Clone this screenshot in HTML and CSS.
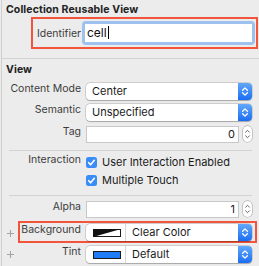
FILE: index.html
```html
<!DOCTYPE html>
<html lang="en">
<head>
  <meta charset="UTF-8">
  <title>Attributes Inspector</title>
  <link rel="stylesheet" href="styles.css">
</head>
<body>
  <div class="panel">
    <h2 class="section-title">Collection Reusable View</h2>
    <div class="highlight ident">
      <span class="label">Identifier</span>
      <div class="focus-ring">
        <div class="text-input">cell<span class="caret"></span></div>
      </div>
    </div>

    <hr class="rule full">

    <h2 class="section-title view">View</h2>

    <div class="row first">
      <span class="gutter"></span>
      <span class="label">Content Mode</span>
      <div class="popup">
        <span class="popup-text">Center</span>
        <span class="popup-btn">
          <svg viewBox="0 0 14 17" width="14" height="17"><path d="M4.6 7.3 7 4.9 9.4 7.3M4.6 9.7 7 12.1 9.4 9.7" fill="none" stroke="#fff" stroke-width="1.3" stroke-linecap="round" stroke-linejoin="round"/></svg>
        </span>
      </div>
    </div>

    <div class="row">
      <span class="gutter"></span>
      <span class="label">Semantic</span>
      <div class="popup">
        <span class="popup-text">Unspecified</span>
        <span class="popup-btn">
          <svg viewBox="0 0 14 17" width="14" height="17"><path d="M4.6 7.3 7 4.9 9.4 7.3M4.6 9.7 7 12.1 9.4 9.7" fill="none" stroke="#fff" stroke-width="1.3" stroke-linecap="round" stroke-linejoin="round"/></svg>
        </span>
      </div>
    </div>

    <div class="row tag">
      <span class="gutter"></span>
      <span class="label">Tag</span>
      <div class="field">0</div>
      <span class="stepper">
        <svg viewBox="0 0 9 16" width="9" height="16"><path d="M2.6 6.2 4.5 4.3 6.4 6.2M2.6 9.8 4.5 11.7 6.4 9.8" fill="none" stroke="#666" stroke-width="1" stroke-linecap="round" stroke-linejoin="round"/></svg>
      </span>
    </div>

    <hr class="rule">

    <div class="row checks">
      <span class="gutter"></span>
      <span class="label">Interaction</span>
      <div class="check-list">
        <div class="check-item">
          <svg class="checkbox" viewBox="0 0 11 11" width="11" height="11"><rect width="11" height="11" rx="2.5" fill="#3a8cf6"/><path d="M2.7 5.7 4.6 7.8 8.3 3.3" fill="none" stroke="#fff" stroke-width="1.6" stroke-linecap="round" stroke-linejoin="round"/></svg>
          <span>User Interaction Enabled</span>
        </div>
        <div class="check-item">
          <svg class="checkbox" viewBox="0 0 11 11" width="11" height="11"><rect width="11" height="11" rx="2.5" fill="#3a8cf6"/><path d="M2.7 5.7 4.6 7.8 8.3 3.3" fill="none" stroke="#fff" stroke-width="1.6" stroke-linecap="round" stroke-linejoin="round"/></svg>
          <span>Multiple Touch</span>
        </div>
      </div>
    </div>

    <hr class="rule">

    <div class="row alpha">
      <span class="gutter"></span>
      <span class="label">Alpha</span>
      <div class="field">1</div>
      <span class="stepper">
        <svg viewBox="0 0 9 16" width="9" height="16"><path d="M2.6 6.2 4.5 4.3 6.4 6.2M2.6 9.8 4.5 11.7 6.4 9.8" fill="none" stroke="#666" stroke-width="1" stroke-linecap="round" stroke-linejoin="round"/></svg>
      </span>
    </div>

    <div class="row bg">
      <span class="gutter">
        <svg class="plus" viewBox="0 0 7 7" width="7" height="7"><path d="M3.5 0V7M0 3.5H7" stroke="#a3a3a3" stroke-width="1"/></svg>
      </span>
      <div class="highlight bg-box">
        <span class="label">Background</span>
        <div class="popup">
          <span class="swatch-cell">
            <svg class="swatch" viewBox="0 0 28 8" width="28" height="8"><rect x="0.5" y="0.5" width="27" height="7" fill="#fff" stroke="#1a1a1a"/><polygon points="0,0 28,0 0,8" fill="#111"/></svg>
          </span>
          <span class="popup-text">Clear Color</span>
          <span class="popup-btn">
            <svg viewBox="0 0 14 17" width="14" height="17"><path d="M4.6 7.3 7 4.9 9.4 7.3M4.6 9.7 7 12.1 9.4 9.7" fill="none" stroke="#fff" stroke-width="1.3" stroke-linecap="round" stroke-linejoin="round"/></svg>
          </span>
        </div>
      </div>
    </div>

    <div class="row tint">
      <span class="gutter">
        <svg class="plus" viewBox="0 0 7 7" width="7" height="7"><path d="M3.5 0V7M0 3.5H7" stroke="#a3a3a3" stroke-width="1"/></svg>
      </span>
      <span class="label">Tint</span>
      <div class="popup">
        <span class="swatch-cell">
          <svg class="swatch" viewBox="0 0 28 8" width="28" height="8"><rect x="0.5" y="0.5" width="27" height="7" fill="#1f7cf5" stroke="#1a1a1a"/></svg>
        </span>
        <span class="popup-text">Default</span>
        <span class="popup-btn">
          <svg viewBox="0 0 14 17" width="14" height="17"><path d="M4.6 7.3 7 4.9 9.4 7.3M4.6 9.7 7 12.1 9.4 9.7" fill="none" stroke="#fff" stroke-width="1.3" stroke-linecap="round" stroke-linejoin="round"/></svg>
        </span>
      </div>
    </div>

    <hr class="rule last">
  </div>
</body>
</html>
```

FILE: styles.css
```css
* {
  box-sizing: border-box;
}
body {
  margin: 0;
  background: #ececec;
  font-family: Inter, 'Liberation Sans', sans-serif;
  color: #1f1f1f;
}
.panel {
  margin-left: 1px;
  border-left: 1px solid #cfcfcf;
  height: 266px;
  padding-right: 7px;
  overflow: hidden;
}
.section-title {
  margin: 0;
  padding: 3px 0 0 4px;
  font-size: 10.5px;
  line-height: 14px;
  font-weight: 700;
  color: #222;
  letter-spacing: 0.1px;
}
.section-title.view {
  padding-top: 0;
  margin-top: 4px;
}
.highlight {
  border: 2px solid #f2553b;
}
.label {
  flex: none;
  width: 71px;
  margin: 1px 0 0 -8px;
  text-align: right;
  font-size: 10.5px;
  line-height: 10px;
  color: #3c3c3c;
  white-space: nowrap;
}

/* identifier */
.ident {
  display: flex;
  height: 32px;
  margin: 0 -6px 0 29px;
  padding: 2px 1px 2px 0;
}
.ident .label {
  width: 48px;
  margin: 8px 1px 0 0;
}
.focus-ring {
  flex: 1;
  border: 3px solid #9dc2ef;
  border-radius: 4px;
}
.text-input {
  height: 18px;
  background: #fff;
  font-size: 12px;
  line-height: 18px;
  padding-left: 2px;
  color: #111;
}
.caret {
  display: inline-block;
  width: 1px;
  height: 13px;
  margin-left: 1px;
  background: #000;
  vertical-align: -2px;
}

/* separators */
.rule {
  height: 0;
  border: 0;
  border-top: 1px solid #d3d3d3;
  margin: 7px 0 0 7px;
}
.rule.full {
  margin: 9px -7px 0 0;
}
.rule.last {
  margin-top: 4px;
}

/* rows */
.row {
  display: flex;
  height: 17px;
  margin-top: 4px;
}
.row.first {
  margin-top: 6px;
}
.row.tag {
  margin-top: 5px;
}
.row.checks {
  height: auto;
  margin-top: 4px;
}
.row.checks .label {
  margin-top: 0;
}
.row.alpha {
  margin-top: 5px;
}
.row.bg {
  height: 22px;
  margin: 3px -5px 0 0;
}
.row.tint {
  margin-top: 3px;
}
.gutter {
  flex: none;
  width: 16px;
  display: flex;
  align-items: center;
  padding-left: 5px;
}
.row.bg .gutter {
  padding-top: 2px;
}

/* popup button */
.popup {
  flex: 1;
  display: flex;
  height: 17px;
  margin-left: 5px;
  background: #fff;
  border-radius: 4px;
  box-shadow: 0 0 0 0.5px rgba(0, 0, 0, 0.22), 0 0.5px 1px rgba(0, 0, 0, 0.2);
}
.popup-text {
  flex: 1;
  padding-left: 6px;
  font-size: 11px;
  line-height: 17px;
  color: #1a1a1a;
}
.popup-btn {
  flex: none;
  width: 14px;
  height: 17px;
  border-radius: 0 4px 4px 0;
  background: linear-gradient(#62a7fa, #1b6ef2);
}
.popup-btn svg {
  display: block;
}
.swatch-cell {
  flex: none;
  width: 40px;
  padding-left: 7px;
  border-right: 1px solid #d6d6d6;
  display: flex;
  align-items: center;
}
.swatch {
  display: block;
}

/* number fields */
.field {
  flex: 1;
  height: 17px;
  margin-left: 5px;
  background: #fff;
  border: 1px solid #c8c8c8;
  padding-right: 3px;
  text-align: right;
  font-size: 11px;
  line-height: 15px;
  color: #1a1a1a;
}
.stepper {
  flex: none;
  width: 9px;
  height: 16px;
  margin-left: 4px;
  background: #fff;
  border-radius: 4.5px;
  box-shadow: 0 0 0 0.5px rgba(0, 0, 0, 0.35);
}
.stepper svg {
  display: block;
}

/* checkboxes */
.check-list {
  display: flex;
  flex-direction: column;
  gap: 3px;
  margin-left: 5px;
}
.check-item {
  display: flex;
  align-items: center;
  gap: 5px;
  height: 15px;
  font-size: 11px;
  line-height: 15px;
  color: #1a1a1a;
}

/* background highlight row */
.bg-box {
  flex: 1;
  display: flex;
  padding: 1px 3px 0 0;
}
.bg-box .label {
  width: 61px;
  margin-left: 0;
}
.plus {
  display: block;
}
```
